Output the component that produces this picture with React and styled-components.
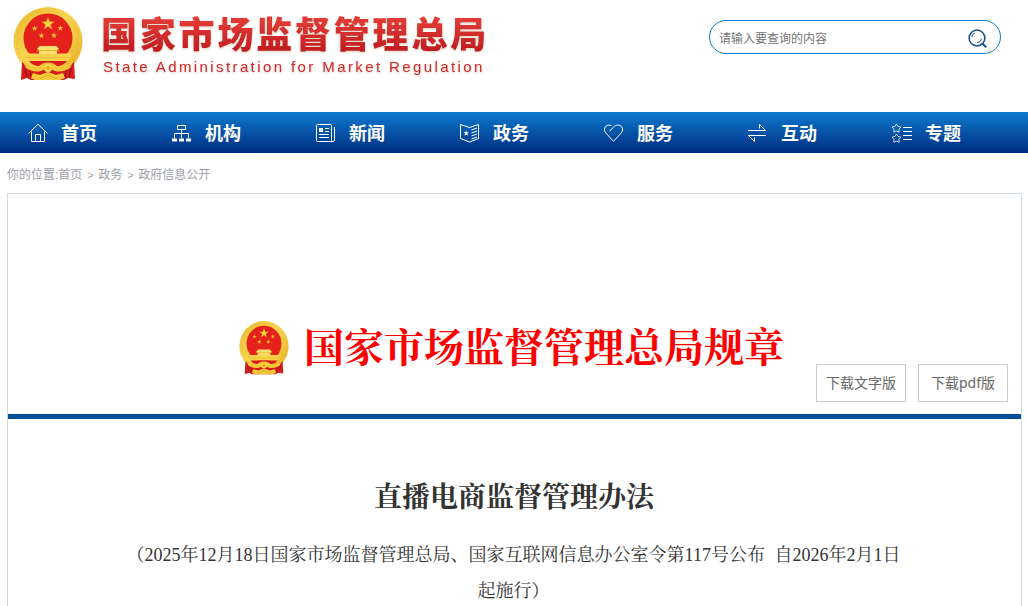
import React from "react";
import styled, { createGlobalStyle } from "styled-components";

const sans = `"Liberation Sans", "Noto Sans CJK SC", sans-serif`;
const serif = `"Liberation Serif", "Noto Serif CJK SC", "Noto Sans CJK SC", serif`;

const star = (cx, cy, r, inner = 0.4) => {
  const pts = [];
  for (let i = 0; i < 10; i++) {
    const a = (Math.PI / 5) * i - Math.PI / 2;
    const d = i % 2 ? r * inner : r;
    pts.push(`${(cx + d * Math.cos(a)).toFixed(2)},${(cy + d * Math.sin(a)).toFixed(2)}`);
  }
  return pts.join(" ");
};

const Emblem = ({ id, width, height }) => (
  <svg width={width} height={height} viewBox="0 0 70 74" preserveAspectRatio="none">
    <defs>
      <linearGradient id={id} x1="0" y1="0" x2="1" y2="1">
        <stop offset="0" stopColor="#e9b72c" />
        <stop offset="0.45" stopColor="#f8d653" />
        <stop offset="1" stopColor="#e8ac20" />
      </linearGradient>
    </defs>
    <circle cx="35" cy="34.5" r="34.5" fill={`url(#${id})`} />
    <circle cx="35" cy="34.5" r="31" fill="none" stroke="#d9a322" strokeWidth="2.5" strokeDasharray="1 2.2" opacity="0.25" />
    <path d="M9 55 Q14 60 22 62 H48 Q56 60 61 55 L62 72 L55 71 L51 73 L18 73 L14 71 L8 73 Z" fill="#d51e1a" />
    <path d="M12 61 l2 9 M17 63 l1 8 M58 61 l-2 9 M53 63 l-1 8" stroke="#9f1013" strokeWidth="1.2" />
    <circle cx="35" cy="31" r="24.5" fill="#e5211b" />
    <path d="M11.5 46.5 Q12 52 16 54 L54 54 Q58 52 58.5 46.5 Z" fill="#f8d04a" />
    <path d="M24 41.5 L27 39 H43 L46 41.5 L44 43 V47 H26 V43 Z" fill="#fae071" />
    <path d="M24 43.5 H46" stroke="#ecb427" />
    <path d="M12 50.5 H58" stroke="#e8b62c" strokeWidth="0.8" />
    <path d="M16 54 H54 Q51 58 46 59 H24 Q19 58 16 54 Z" fill="#d91f1a" />
    <path d="M9 52 Q16 61 25 60 Q29 55.5 35 55.5 Q41 55.5 45 60 Q54 61 61 52 L57 61 Q49 66 42 64 L35 61 L28 64 Q21 66 13 61 Z" fill="#f4c63a" />
    <circle cx="35" cy="61" r="4.2" fill="#f8cf43" />
    <circle cx="35" cy="61" r="1.6" fill="#dda022" />
    <path d="M20 66 L27 68 L35 65 L43 68 L50 66 L52 71 L47 73 H22 L18 71 Z" fill="#f5cb3c" />
    <path d="M26 72 L35 68 L44 72" fill="none" stroke="#dda022" />
    <polygon points={star(35, 16.8, 6.8)} fill="#f8cf3d" />
    <polygon points={star(21.7, 21.5, 3.2)} fill="#f6be35" />
    <polygon points={star(47.3, 21.2, 3.2)} fill="#f6be35" />
    <polygon points={star(28.5, 28.6, 3.2)} fill="#f6be35" />
    <polygon points={star(41, 28.4, 3.2)} fill="#f6be35" />
  </svg>
);

const icons = {
  home: (
    <>
      <path d="M0.5 10.5 L10 1.2 L19.5 10.5" />
      <path d="M3.5 8.5 V18.5 H16.5 V8.5" />
      <path d="M7.5 18.5 V11.5 H12.5 V18.5" />
    </>
  ),
  org: (
    <>
      <path d="M5.5 2.5 H13.5 V6.5 H5.5 Z M9.5 6.5 V15 M2.5 15 V10.5 H16.5 V15" />
      <path d="M0 17 H5 M7 17 H12 M14 17 H19" strokeWidth="3" />
    </>
  ),
  news: (
    <>
      <rect x="0.5" y="1.5" width="15" height="17" rx="1" />
      <path d="M18.5 4 V17 Q18.5 18.5 17 18.5 H15" />
      <rect x="3" y="5" width="4" height="4" fill="#fff" stroke="none" />
      <path d="M9 5.5 H13 M9 8.5 H13 M3 11.5 H13 M3 14.5 H13" />
    </>
  ),
  gov: (
    <>
      <path d="M0.5 1.5 L9.5 4.5 L18.5 1.5 V15.5 L9.5 19 L0.5 15.5 Z" />
      <path d="M11.5 7 L17 5 M11.5 10 L17 8 M11.5 13 L17 11 M11.5 16 L17 14" />
      <polygon points={star(6.2, 10.2, 3)} fill="#fff" stroke="none" />
    </>
  ),
  heart: (
    <path d="M5.5 8.3 L9.5 4.2 C12 1.4 15.8 1.4 17.6 3.8 C19 5.8 18.8 8.2 17 10.2 L9.5 18.3 L2 10.2 C0 8 0 5 1.8 3.3 C3.4 1.9 5.8 1.8 7.5 2.8" />
  ),
  swap: <path d="M0 7.5 H17.5 L11.5 1.5 V5.5 M18 12.5 H0.5 L6.5 18.5 V14.5" />,
  topic: (
    <>
      <polygon points={star(4.5, 5.5, 4.6, 0.55)} strokeWidth="0.8" />
      <polygon points={star(4.5, 15.5, 4.6, 0.55)} strokeWidth="0.8" />
      <path d="M11 4.5 H20 M11 8.5 H20 M11 12.5 H20 M11 16.5 H20" />
    </>
  ),
};

const menu = [
  { icon: "home", label: "首页" },
  { icon: "org", label: "机构" },
  { icon: "news", label: "新闻" },
  { icon: "gov", label: "政务" },
  { icon: "heart", label: "服务" },
  { icon: "swap", label: "互动" },
  { icon: "topic", label: "专题" },
];

const App = () => {
  return (
    <Page>
      <GlobalStyle />
      <Header>
        <Emblem id="emblemTop" width={70} height={74} />
        <Brand>
          <BrandName>国家市场监督管理总局</BrandName>
          <BrandSub>State Administration for Market Regulation</BrandSub>
        </Brand>
        <Search>
          <input type="text" placeholder="请输入要查询的内容" />
          <svg width="20" height="20" viewBox="0 0 20 20" fill="none" stroke="#104b93">
            <circle cx="9" cy="9" r="7.9" strokeWidth="1.5" />
            <path d="M14.2 14.2 L18.2 18.4" strokeWidth="2" />
            <path d="M3.8 8 Q4.3 4.7 7 4 M9 13.6 Q12.8 13.2 13.6 9.6" strokeWidth="0.9" />
          </svg>
        </Search>
      </Header>
      <Nav>
        {menu.map((item) => (
          <NavItem key={item.icon} href="#">
            <svg width="21" height="20" viewBox="0 0 21 20" fill="none" stroke="#fff">
              {icons[item.icon]}
            </svg>
            <span>{item.label}</span>
          </NavItem>
        ))}
      </Nav>
      <Breadcrumb>
        <span>你的位置:首页</span>
        <i>&gt;</i>
        <span>政务</span>
        <i>&gt;</i>
        <span>政府信息公开</span>
      </Breadcrumb>
      <Content>
        <Banner>
          <BannerTitle>
            <Emblem id="emblemDoc" width={50} height={54} />
            <h1>国家市场监督管理总局规章</h1>
          </BannerTitle>
          <Downloads>
            <DownloadButton>下载文字版</DownloadButton>
            <DownloadButton>下载pdf版</DownloadButton>
          </Downloads>
        </Banner>
        <Article>
          <h2>直播电商监督管理办法</h2>
          <p>
            （2025年12月18日国家市场监督管理总局、国家互联网信息办公室令第117号公布 自2026年2月1日
            <br />
            起施行）
          </p>
        </Article>
      </Content>
    </Page>
  );
};

const GlobalStyle = createGlobalStyle`
  * {
    box-sizing: border-box;
    margin: 0;
    padding: 0;
  }

  body {
    background: #fff;
    font-family: ${sans};
    overflow: hidden;
  }

  svg {
    display: block;
    flex-shrink: 0;
  }
`;

const Page = styled.div`
  width: 1028px;
  height: 606px;
  overflow: hidden;
`;

const Header = styled.header`
  display: flex;
  align-items: flex-start;
  height: 112px;
  padding: 7px 27px 0 13px;
`;

const Brand = styled.div`
  margin-left: 18px;
  padding-top: 7px;
  filter: drop-shadow(0 1px 1px rgba(190, 150, 110, 0.5));
`;

const BrandName = styled.div`
  font-size: 36px;
  font-weight: 900;
  line-height: 44px;
  letter-spacing: 2.8px;
  white-space: nowrap;
  color: transparent;
  background: linear-gradient(#e03a36 15%, #c01c20 85%);
  background-clip: text;
`;

const BrandSub = styled.div`
  margin: -1px 0 0 2px;
  font-size: 15px;
  line-height: 20px;
  letter-spacing: 2.4px;
  white-space: nowrap;
  color: #d0282b;
`;

const Search = styled.div`
  display: flex;
  align-items: center;
  width: 292px;
  height: 34px;
  margin: 13px 0 0 auto;
  padding: 3px 12px 0 9px;
  border: 1px solid #0d7bcf;
  border-radius: 17px;

  input {
    flex: 1;
    min-width: 0;
    border: 0;
    outline: 0;
    background: none;
    font-family: ${sans};
    font-size: 12px;
  }

  input::placeholder {
    color: #757575;
  }
`;

const Nav = styled.nav`
  display: flex;
  height: 41px;
  padding: 1px 0 0 28px;
  background: linear-gradient(#0e7bcf, #002c80);
`;

const NavItem = styled.a`
  display: flex;
  align-items: center;
  flex: 0 0 144px;
  height: 40px;
  gap: 12px;
  color: #fff;
  font-size: 18px;
  font-weight: bold;
  line-height: 38px;
  text-decoration: none;

  span {
    padding-top: 2px;
  }
`;

const Breadcrumb = styled.div`
  display: flex;
  height: 40px;
  padding: 2px 0 0 7px;
  color: #9b9ea8;
  font-size: 12px;
  line-height: 40px;

  i {
    width: 16px;
    font-size: 11px;
    font-style: normal;
    text-align: center;
  }
`;

const Content = styled.main`
  width: 1015px;
  height: 600px;
  margin-left: 7px;
  border: 1px solid #d0dae6;
`;

const Banner = styled.section`
  display: flex;
  flex-direction: column;
  height: 225px;
  padding-top: 123px;
  border-bottom: 5px solid #015198;
`;

const BannerTitle = styled.div`
  display: flex;
  align-items: center;
  height: 47px;
  padding-left: 231px;

  svg {
    margin-top: 14px;
  }

  h1 {
    margin: 17px 0 0 15px;
    color: #ff0000;
    font-family: ${serif};
    font-size: 40px;
    font-weight: 700;
    line-height: 50px;
    white-space: nowrap;
  }
`;

const Downloads = styled.div`
  display: flex;
  justify-content: flex-end;
  gap: 12px;
  padding-right: 13px;
`;

const DownloadButton = styled.button`
  width: 90px;
  height: 38px;
  padding-bottom: 2px;
  border: 1px solid #ccc;
  background: #fff;
  color: #666;
  font-family: "Noto Sans", "Noto Sans CJK SC", sans-serif;
  font-size: 14px;
  white-space: nowrap;
`;

const Article = styled.article`
  padding-top: 59px;
  color: #333;
  font-family: ${serif};
  text-align: center;

  h2 {
    margin-right: 1px;
    font-size: 28px;
    font-weight: 700;
    line-height: 40px;
  }

  p {
    margin: 19px 2px 0 0;
    font-size: 18px;
    line-height: 36px;
    word-spacing: 5px;
    white-space: nowrap;
  }
`;

export default App;
